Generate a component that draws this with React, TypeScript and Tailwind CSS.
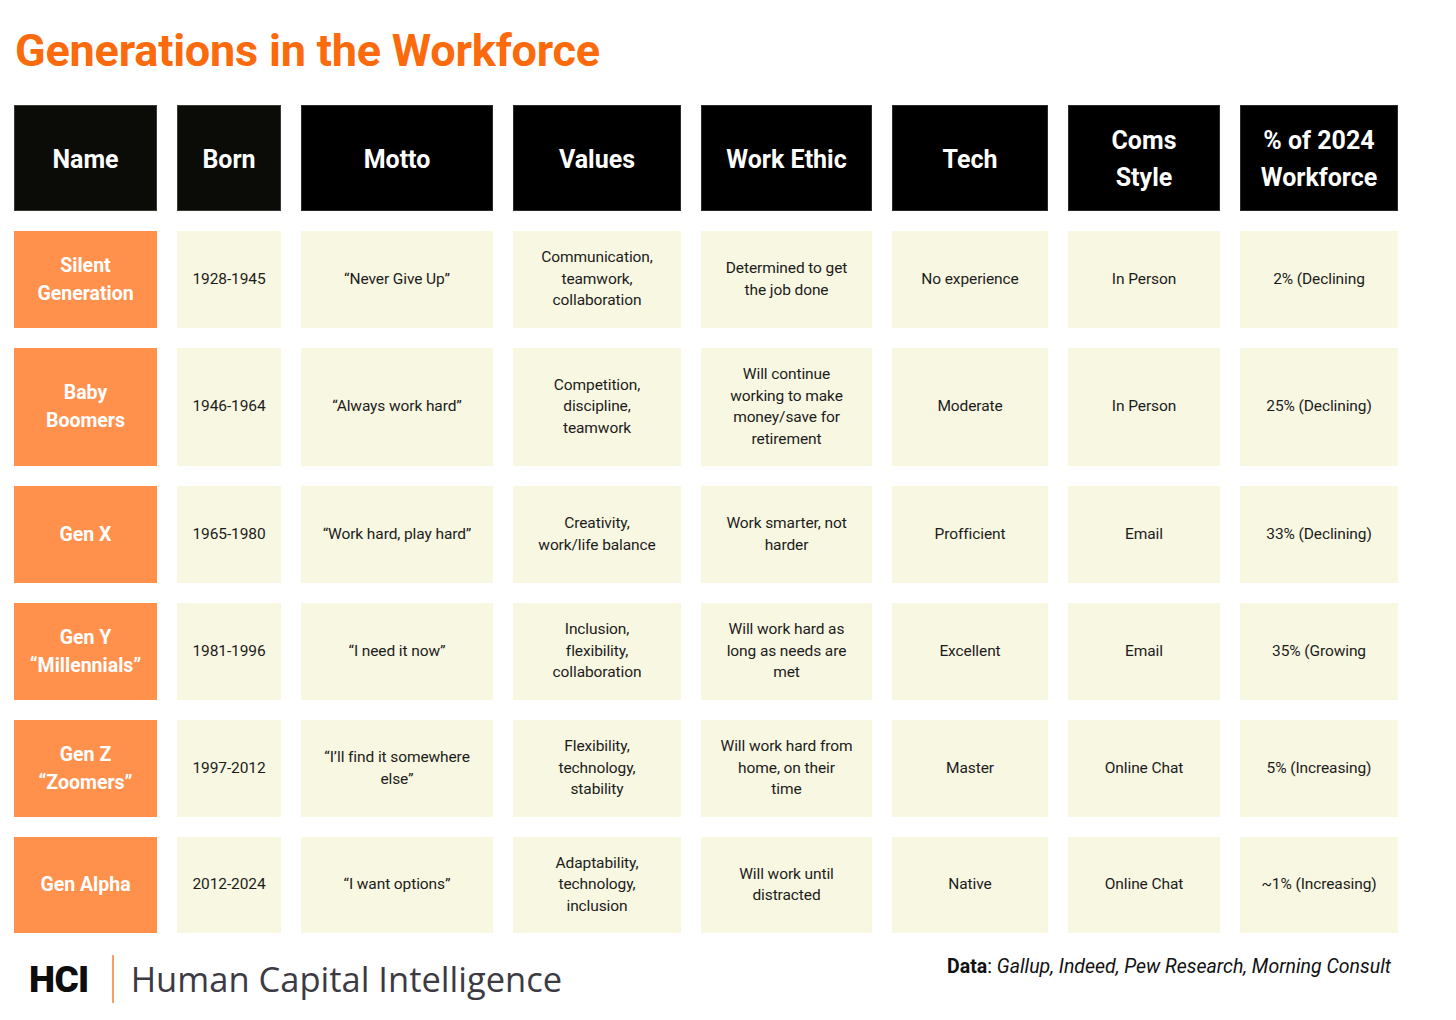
const rows = [
  {
    name: ["Silent", "Generation"],
    born: "1928-1945",
    motto: ["“Never Give Up”"],
    values: ["Communication,", "teamwork,", "collaboration"],
    ethic: ["Determined to get", "the job done"],
    tech: "No experience",
    coms: "In Person",
    pct: "2% (Declining",
    h: "h-[97px]",
  },
  {
    name: ["Baby", "Boomers"],
    born: "1946-1964",
    motto: ["“Always work hard”"],
    values: ["Competition,", "discipline,", "teamwork"],
    ethic: ["Will continue", "working to make", "money/save for", "retirement"],
    tech: "Moderate",
    coms: "In Person",
    pct: "25% (Declining)",
    h: "h-[118px]",
  },
  {
    name: ["Gen X"],
    born: "1965-1980",
    motto: ["“Work hard, play hard”"],
    values: ["Creativity,", "work/life balance"],
    ethic: ["Work smarter, not", "harder"],
    tech: "Profficient",
    coms: "Email",
    pct: "33% (Declining)",
    h: "h-[97px]",
  },
  {
    name: ["Gen Y", "“Millennials”"],
    born: "1981-1996",
    motto: ["“I need it now”"],
    values: ["Inclusion,", "flexibility,", "collaboration"],
    ethic: ["Will work hard as", "long as needs are", "met"],
    tech: "Excellent",
    coms: "Email",
    pct: "35% (Growing",
    h: "h-[97px]",
  },
  {
    name: ["Gen Z", "“Zoomers”"],
    born: "1997-2012",
    motto: ["“I’ll find it somewhere", "else”"],
    values: ["Flexibility,", "technology,", "stability"],
    ethic: ["Will work hard from", "home, on their", "time"],
    tech: "Master",
    coms: "Online Chat",
    pct: "5% (Increasing)",
    h: "h-[97px]",
  },
  {
    name: ["Gen Alpha"],
    born: "2012-2024",
    motto: ["“I want options”"],
    values: ["Adaptability,", "technology,", "inclusion"],
    ethic: ["Will work until", "distracted"],
    tech: "Native",
    coms: "Online Chat",
    pct: "~1% (Increasing)",
    h: "h-[96px]",
  },
];

const headers: { lines: string[]; dark?: boolean }[] = [
  { lines: ["Name"], dark: true },
  { lines: ["Born"], dark: true },
  { lines: ["Motto"] },
  { lines: ["Values"] },
  { lines: ["Work Ethic"] },
  { lines: ["Tech"] },
  { lines: ["Coms", "Style"] },
  { lines: ["% of 2024", "Workforce"] },
];

function Lines({ lines }: { lines: string[] }) {
  return (
    <>
      {lines.map((l, i) => (
        <span key={i} className="block">
          {l}
        </span>
      ))}
    </>
  );
}

function Cell({ children }: { children: React.ReactNode }) {
  return (
    <div className="flex items-center justify-center bg-[#f8f7e1] px-1 text-center text-[15.5px] leading-[21.5px] tracking-[-0.1px] text-[#1c1c1c]">
      <div>{children}</div>
    </div>
  );
}

export default function App() {
  return (
    <div className="h-[1020px] w-[1456px] bg-white font-['Roboto',sans-serif]">
      <h1 className="pl-[15px] pt-[25px] text-[45px] font-bold leading-[52px] tracking-[-0.2px] text-[#fb6a0c]">
        Generations in the Workforce
      </h1>

      <div className="ml-[14px] mt-[28px] grid w-[1384px] grid-cols-[143px_104px_192px_168px_171px_156px_152px_158px] gap-x-[20px] gap-y-[20px]">
        {headers.map((h, i) => (
          <div
            key={i}
            className={
              "flex h-[106px] items-center justify-center text-center text-[25px] font-bold leading-[37px] text-white " +
              (h.dark ? "border border-[#3a3a36] bg-[#0b0c07]" : "border border-[#2a2a2a] bg-black")
            }
          >
            <div className="pt-[2px]">
              <Lines lines={h.lines} />
            </div>
          </div>
        ))}

        {rows.map((r, ri) => (
          <div key={ri} className="contents">
            <div
              className={
                r.h +
                " flex items-center justify-center bg-[#ff914d] text-center text-[19.5px] font-bold leading-[28px] text-white"
              }
            >
              <div>
                <Lines lines={r.name} />
              </div>
            </div>
            <Cell>{r.born}</Cell>
            <Cell>
              <Lines lines={r.motto} />
            </Cell>
            <Cell>
              <Lines lines={r.values} />
            </Cell>
            <Cell>
              <Lines lines={r.ethic} />
            </Cell>
            <Cell>{r.tech}</Cell>
            <Cell>{r.coms}</Cell>
            <Cell>{r.pct}</Cell>
          </div>
        ))}
      </div>

      <div className="ml-[29px] mr-[65px] mt-[22px] flex items-start justify-between">
        <div className="flex items-center">
          <span className="text-[37px] font-black leading-none tracking-[-0.6px] text-[#0d0d0d]">HCI</span>
          <span className="ml-[23px] h-[48px] w-[2px] bg-[#f7a066]" />
          <span className="ml-[17px] font-['Open_Sans',sans-serif] text-[34.5px] leading-none tracking-[0px] text-[#3c3b43]">
            Human Capital Intelligence
          </span>
        </div>
        <div className="text-[19.5px] leading-[24px] text-[#111]">
          <span className="font-bold">Data</span>: <span className="italic">Gallup, Indeed, Pew Research, Morning Consult</span>
        </div>
      </div>
    </div>
  );
}
